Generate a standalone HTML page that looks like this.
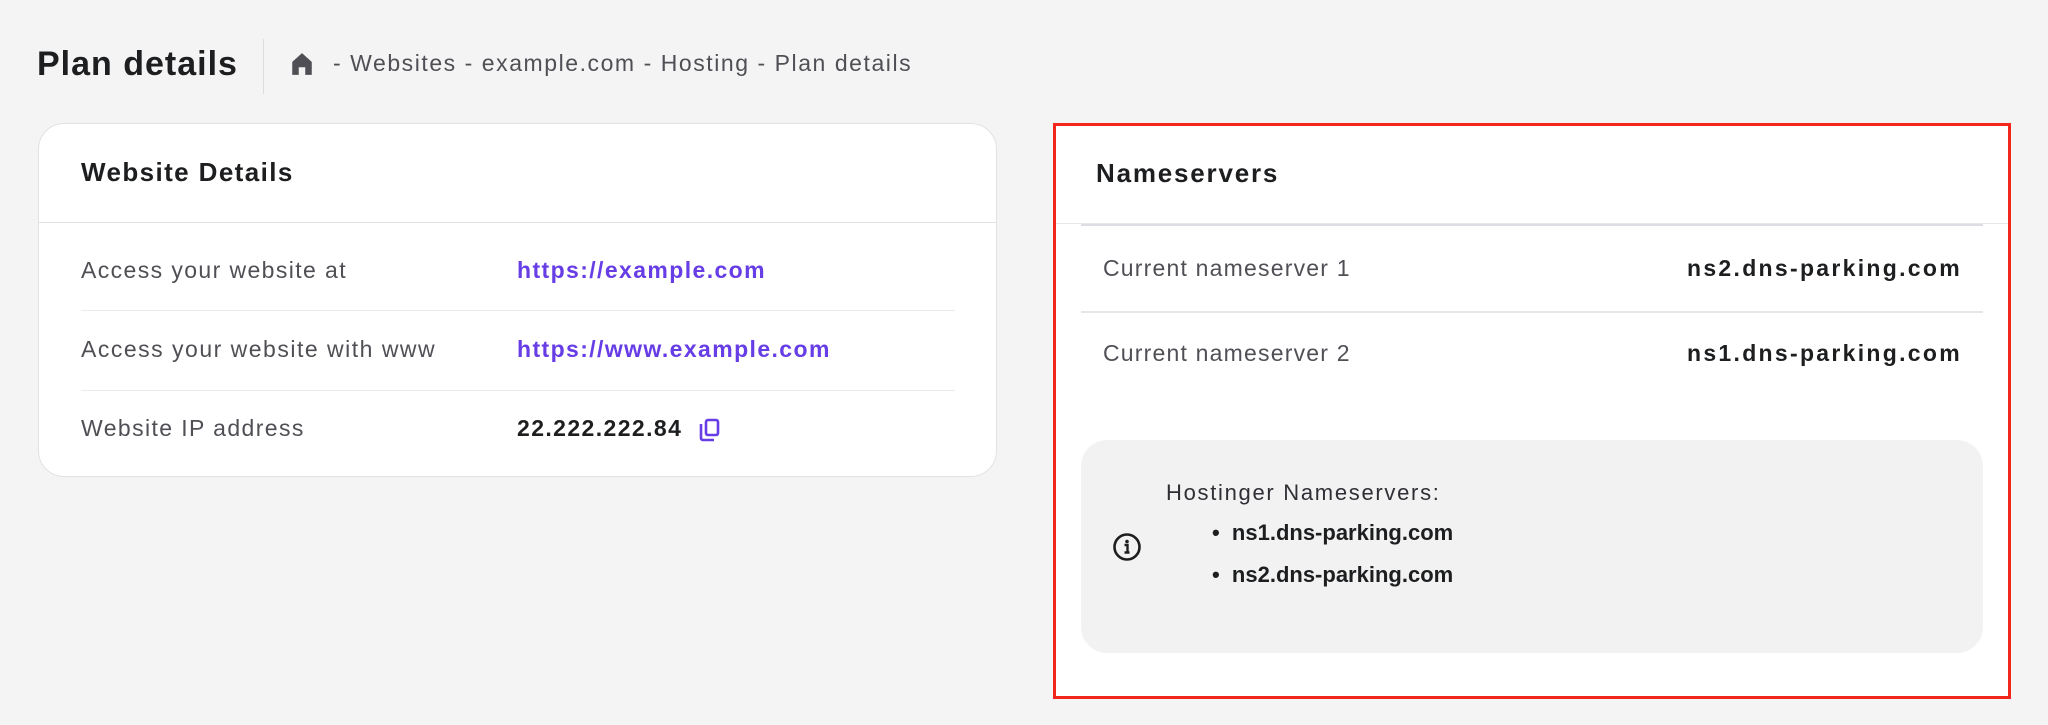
<!DOCTYPE html>
<html><head><meta charset="utf-8"><style>
*{margin:0;padding:0;box-sizing:border-box}
body{width:2048px;height:725px;background:#f4f4f4;font-family:"Liberation Sans",sans-serif;color:#1d1e20;position:relative;overflow:hidden}
.a{position:absolute;white-space:nowrap}
.lbl{font-size:23px;color:#4f4f55;letter-spacing:1.4px}
.b{font-weight:bold}
</style></head><body>
<div class="a b" style="left:37px;top:45px;font-size:34px;letter-spacing:1.0px">Plan details</div>
<div class="a" style="left:263px;top:39px;width:1px;height:55px;background:#ddd"></div>
<svg class="a" style="left:289px;top:51px" width="26" height="26" viewBox="0 0 24 24"><path d="M12 2 L3 10 V22 H9 V15 H15 V22 H21 V10 Z" fill="#4f4f55"/></svg>
<div class="a lbl" style="left:333px;top:50px;font-size:23px;letter-spacing:1.55px">- Websites - example.com - Hosting - Plan details</div>

<div class="a" style="left:38px;top:123px;width:959px;height:354px;background:#fff;border:1px solid #e2e2e2;border-radius:26px"></div>
<div class="a b" style="left:81px;top:157px;font-size:26px;letter-spacing:1.4px">Website Details</div>
<div class="a" style="left:38px;top:222px;width:959px;height:1px;background:#e2e2e2"></div>
<div class="a lbl" style="left:81px;top:257px">Access your website at</div>
<div class="a b" style="left:517px;top:257px;font-size:23px;color:#673de6;letter-spacing:1.4px">https://example.com</div>
<div class="a" style="left:81px;top:310px;width:874px;height:1px;background:#ebebeb"></div>
<div class="a lbl" style="left:81px;top:336px;letter-spacing:1.5px">Access your website with www</div>
<div class="a b" style="left:517px;top:336px;font-size:23px;color:#673de6;letter-spacing:1.4px">https://www.example.com</div>
<div class="a" style="left:81px;top:390px;width:874px;height:1px;background:#ebebeb"></div>
<div class="a lbl" style="left:81px;top:415px">Website IP address</div>
<div class="a b" style="left:517px;top:415px;font-size:23px;letter-spacing:1.4px">22.222.222.84</div>
<svg class="a" style="left:698px;top:417px" width="24" height="26" viewBox="0 0 24 26"><rect x="8" y="3" width="12" height="15" rx="2" fill="none" stroke="#673de6" stroke-width="2.6"/><path d="M3 7 V21 a2 2 0 0 0 2 2 H16" fill="none" stroke="#673de6" stroke-width="2.6"/></svg>

<div class="a" style="left:1053px;top:123px;width:958px;height:576px;background:#fff;border:3px solid #f2261b"></div>
<div class="a b" style="left:1096px;top:158px;font-size:26px;letter-spacing:1.8px">Nameservers</div>
<div class="a" style="left:1056px;top:223px;width:952px;height:1px;background:#e6e6ea"></div>
<div class="a" style="left:1081px;top:224px;width:902px;height:2px;background:#dcdce2"></div>
<div class="a lbl" style="left:1103px;top:255px;letter-spacing:1.2px">Current nameserver 1</div>
<div class="a b" style="right:86px;top:255px;font-size:23px;letter-spacing:2.3px">ns2.dns-parking.com</div>
<div class="a" style="left:1081px;top:311px;width:902px;height:2px;background:#e6e6ea"></div>
<div class="a lbl" style="left:1103px;top:340px;letter-spacing:1.2px">Current nameserver 2</div>
<div class="a b" style="right:86px;top:340px;font-size:23px;letter-spacing:2.3px">ns1.dns-parking.com</div>
<div class="a" style="left:1081px;top:440px;width:902px;height:213px;background:#f2f2f2;border-radius:26px"></div>
<svg class="a" style="left:1112px;top:532px" width="30" height="30" viewBox="0 0 30 30"><circle cx="15" cy="15" r="12.5" fill="none" stroke="#1d1e20" stroke-width="2.6"/><circle cx="15" cy="9.5" r="1.8" fill="#1d1e20"/><path d="M12.5 13 H15.5 V20 M12.5 20.5 H17.5" fill="none" stroke="#1d1e20" stroke-width="2.4"/></svg>
<div class="a" style="left:1166px;top:480px;font-size:22px;color:#2f2f35;letter-spacing:1.7px">Hostinger Nameservers:</div>
<div class="a b" style="left:1212px;top:520px;font-size:22px">•&nbsp;&nbsp;ns1.dns-parking.com</div>
<div class="a b" style="left:1212px;top:562px;font-size:22px">•&nbsp;&nbsp;ns2.dns-parking.com</div>
</body></html>
